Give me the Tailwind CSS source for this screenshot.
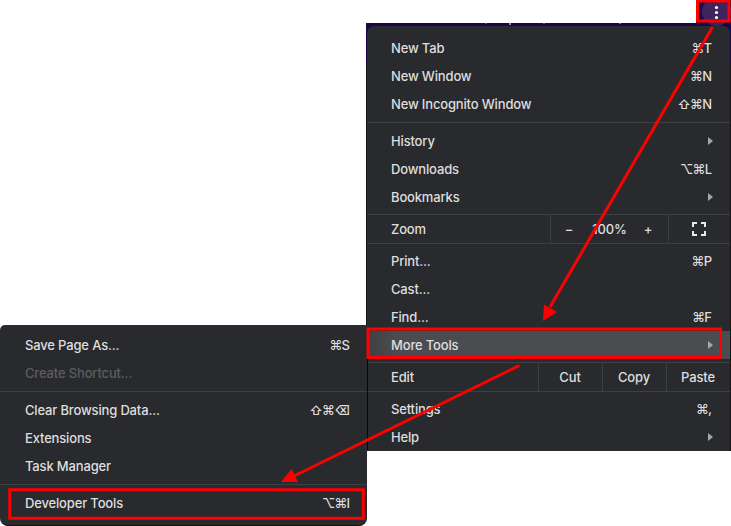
<!DOCTYPE html>
<html lang="en">
<head>
<meta charset="utf-8">
<title>Menu</title>
<script src="https://cdn.jsdelivr.net/npm/@tailwindcss/browser@4"></script>
</head>
<body class="bg-white">
<svg class="hidden">
  <symbol id="tri" viewBox="0 0 5 8"><path d="M0 0L5 4L0 8Z" fill="#a6a7a9"/></symbol>
</svg>
<div class="relative w-[731px] h-[526px] overflow-hidden bg-white font-['Inter','DejaVu_Sans',sans-serif] text-[13px] font-medium tracking-[-0.16px] text-[#dededf] [&_span]:pt-0.5 [&_kbd]:pt-0.5 [&_kbd]:font-['Inter','DejaVu_Sans',sans-serif] [&_kbd]:text-[13px] [&_kbd]:tracking-[-0.8px] [&_kbd]:pr-[0.8px]">

  <!-- browser toolbar behind the menu -->
  <div class="absolute left-[366px] top-[23px] w-[365px] h-[40px] bg-[#1d0547]"></div>
  <div class="absolute left-[366px] top-[63px] w-[365px] h-[388px] bg-[#151517]"></div>
  <div class="absolute left-[485px] top-[23px] w-[2px] h-px bg-[#5d5285]"></div>
  <div class="absolute left-[509px] top-[23px] w-[2px] h-[2px] bg-[#8f88aa]"></div>
  <div class="absolute left-[543px] top-[23px] w-[2px] h-px bg-[#5d5285]"></div>
  <div class="absolute left-[619px] top-[23px] w-[2px] h-px bg-[#8078a0]"></div>
  <div class="absolute left-[696px] top-0 w-[35px] h-[26px] bg-[#1d0547] overflow-hidden">
    <div class="absolute left-[6px] -top-[3px] w-[29px] h-[29px] rounded-full bg-[#3e235f]"></div>
    <svg class="absolute left-[18px] top-[5px]" width="5" height="15" viewBox="0 0 5 15" fill="#fff"><circle cx="2.5" cy="2.5" r="1.6"/><circle cx="2.5" cy="7.5" r="1.6"/><circle cx="2.5" cy="12.5" r="1.6"/></svg>
  </div>

  <!-- main menu -->
  <div class="absolute left-[367px] top-[26px] w-[363px] h-[425px] rounded-t-[7px] bg-[#292a2d] pt-2 flex flex-col">
    <div class="h-7 shrink-0 pl-6 pr-[18px] flex items-center justify-between"><span>New Tab</span><kbd>⌘T</kbd></div>
    <div class="h-7 shrink-0 pl-6 pr-[18px] flex items-center justify-between"><span>New Window</span><kbd>⌘N</kbd></div>
    <div class="h-7 shrink-0 pl-6 pr-[18px] flex items-center justify-between"><span>New Incognito Window</span><kbd>⇧⌘N</kbd></div>
    <div class="h-px shrink-0 my-1 bg-[#3c4043]"></div>
    <div class="h-7 shrink-0 pl-6 pr-[17px] flex items-center justify-between"><span>History</span><svg width="5" height="8"><use href="#tri"/></svg></div>
    <div class="h-7 shrink-0 pl-6 pr-[18px] flex items-center justify-between"><span>Downloads</span><kbd>⌥⌘L</kbd></div>
    <div class="h-7 shrink-0 pl-6 pr-[17px] flex items-center justify-between"><span>Bookmarks</span><svg width="5" height="8"><use href="#tri"/></svg></div>
    <div class="h-[30px] shrink-0 mt-[3px] border-y border-[#3c4043] pl-6 flex items-stretch">
      <span class="w-[159px] self-center">Zoom</span>
      <div class="w-[118px] border-l border-[#3c4043] flex items-center">
        <span class="w-[36px] text-center">−</span><span class="w-[45px] text-center">100%</span><span class="w-[32px] text-center">+</span>
      </div>
      <div class="flex-1 border-l border-[#3c4043] flex items-center justify-center pr-0.5">
        <svg width="14" height="14" viewBox="0 0 14 14" fill="none" stroke="#e8e8e9" stroke-width="2"><path d="M1 5V1H5M9 1H13V5M13 9V13H9M5 13H1V9"/></svg>
      </div>
    </div>
    <div class="h-7 shrink-0 mt-[3px] pl-6 pr-[18px] flex items-center justify-between"><span>Print...</span><kbd>⌘P</kbd></div>
    <div class="h-7 shrink-0 pl-6 pr-[18px] flex items-center justify-between"><span>Cast...</span></div>
    <div class="h-7 shrink-0 pl-6 pr-[18px] flex items-center justify-between"><span>Find...</span><kbd>⌘F</kbd></div>
    <div class="h-7 shrink-0 pl-6 pr-[17px] flex items-center justify-between bg-linear-to-r from-[#3f4043] to-[#4b4c4f] to-8%"><span>More Tools</span><svg width="5" height="8"><use href="#tri"/></svg></div>
    <div class="h-[30px] shrink-0 mt-[3px] border-y border-[#3c4043] pl-6 flex items-stretch">
      <span class="w-[147px] self-center">Edit</span>
      <span class="w-16 border-l border-[#3c4043] flex items-center justify-center pr-px">Cut</span>
      <span class="w-16 border-l border-[#3c4043] flex items-center justify-center pr-px">Copy</span>
      <span class="w-16 border-l border-[#3c4043] flex items-center justify-center pr-px">Paste</span>
    </div>
    <div class="h-7 shrink-0 mt-[3px] pl-6 pr-[18px] flex items-center justify-between"><span>Settings</span><kbd>⌘,</kbd></div>
    <div class="h-7 shrink-0 pl-6 pr-[17px] flex items-center justify-between"><span>Help</span><svg width="5" height="8"><use href="#tri"/></svg></div>
  </div>

  <!-- submenu -->
  <div class="absolute left-0 top-[325px] w-[367px] h-[201px] rounded-tl-[5px] rounded-b-[8px] bg-[#292a2d] pt-1.5 flex flex-col border-b border-[#111114]">
    <div class="h-7 shrink-0 pl-[25px] pr-[17px] flex items-center justify-between"><span>Save Page As...</span><kbd>⌘S</kbd></div>
    <div class="h-7 shrink-0 pl-[25px] pr-[17px] flex items-center justify-between text-[#5c5d5f]"><span>Create Shortcut...</span></div>
    <div class="h-px shrink-0 my-1 bg-[#3c4043]"></div>
    <div class="h-7 shrink-0 pl-[25px] pr-[17px] flex items-center justify-between"><span>Clear Browsing Data...</span><kbd>⇧⌘⌫</kbd></div>
    <div class="h-7 shrink-0 pl-[25px] pr-[17px] flex items-center justify-between"><span>Extensions</span></div>
    <div class="h-7 shrink-0 pl-[25px] pr-[17px] flex items-center justify-between"><span>Task Manager</span></div>
    <div class="h-px shrink-0 my-1 bg-[#3c4043]"></div>
    <div class="h-7 shrink-0 pl-[25px] pr-[17px] flex items-center justify-between"><span>Developer Tools</span><kbd>⌥⌘I</kbd></div>
  </div>
  <div class="absolute left-[367px] top-[359px] w-px h-[92px] bg-[#08080a]"></div>

  <!-- annotations -->
  <svg class="absolute left-0 top-0" width="731" height="526" viewBox="0 0 731 526" fill="none" stroke="#fe0000" stroke-width="3">
    <rect x="697.5" y="1" width="31.5" height="20"/>
    <rect x="368" y="329" width="352.5" height="28.5"/>
    <rect x="9.8" y="489.8" width="353.5" height="28.5"/>
    <path d="M712.5 27L550 307M519.5 365.5L294 476"/>
    <path d="M543 321L544 304.500L557 312ZM281 482L291.500 469L298 482Z" fill="#fe0000" stroke="none"/>
  </svg>
</div>
</body>
</html>
